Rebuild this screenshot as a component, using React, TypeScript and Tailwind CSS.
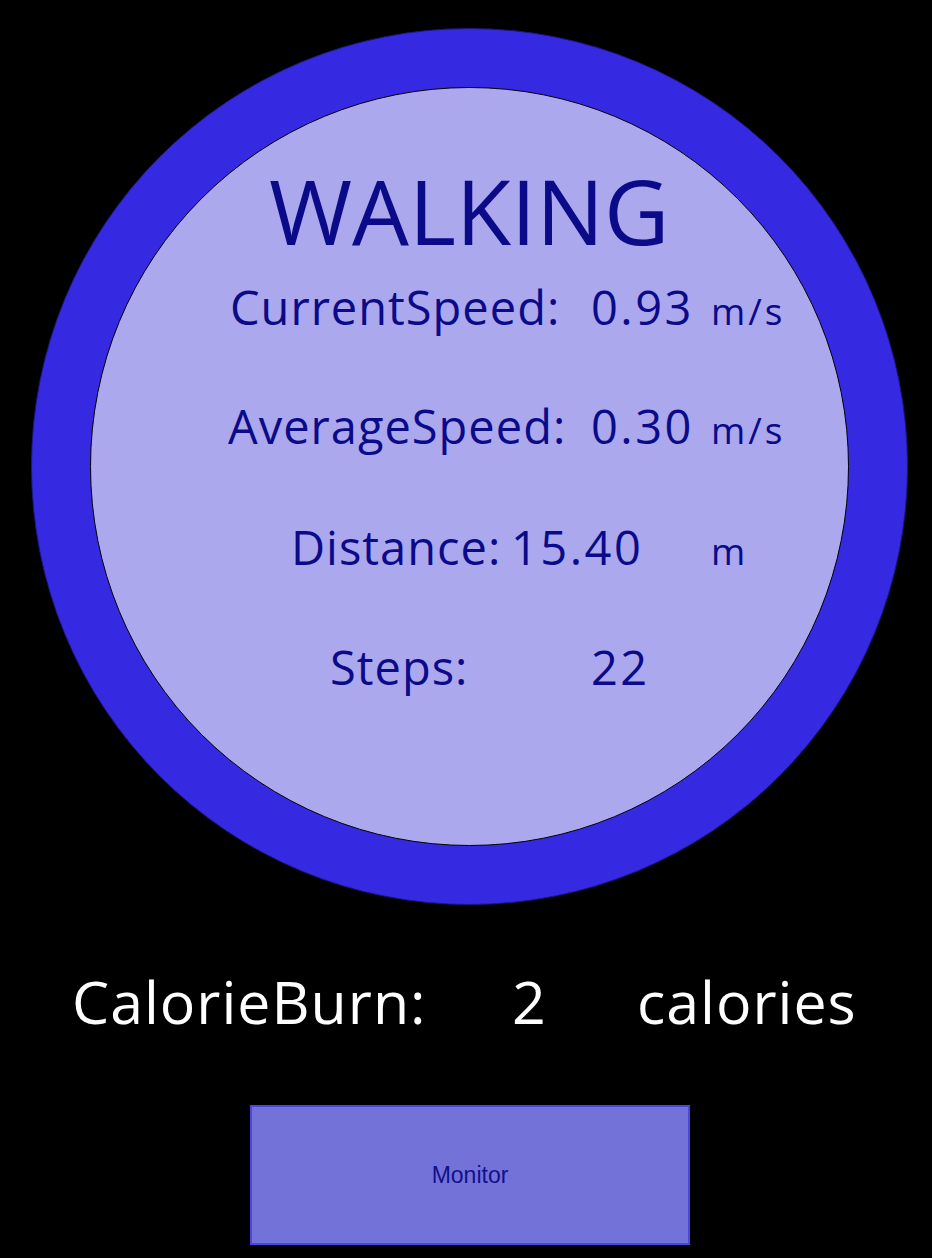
import React from 'react';

const font = { fontFamily: '"Open Sans", "DejaVu Sans", sans-serif' };

type RowProps = {
  label: string;
  value: string;
  unit?: string;
  labelBox: string;
  valueBox: string;
};

// one line of the walking stats, label and value sit at fixed columns
const StatRow: React.FC<RowProps & { className?: string }> = ({ label, value, unit, labelBox, valueBox, className }) => (
  <div className={`flex items-baseline leading-none ${className ?? ''}`}>
    <span className={`shrink-0 whitespace-nowrap text-[47px] tracking-[1px] ${labelBox}`}>{label}</span>
    <span className={`shrink-0 whitespace-nowrap text-[47px] tracking-[2.5px] ${valueBox}`}>{value}</span>
    {unit && <span className="whitespace-nowrap text-[37px] tracking-[3px]">{unit}</span>}
  </div>
);

export default function App() {
  return (
    <div className="min-h-screen w-[932px] bg-black" style={font}>
      <div className="pt-[28px] pl-[31px]">
        {/* outer ring */}
        <div className="flex h-[877px] w-[877px] items-center justify-center rounded-full border border-[#1c1680] bg-[#3629e2]">
          {/* inner face */}
          <div className="flex h-[759px] w-[759px] flex-col rounded-full border border-black bg-[#aba8ee] pt-[77px] text-[#0b0a88]">
            <div className="pl-[178px] text-[90px] leading-none">WALKING</div>
            <StatRow className="mt-[29px]" label="CurrentSpeed:" value="0.93" unit="m/s" labelBox="w-[500px] pl-[139px]" valueBox="w-[120px]" />
            <StatRow className="mt-[72px]" label="AverageSpeed:" value="0.30" unit="m/s" labelBox="w-[500px] pl-[137px]" valueBox="w-[120px]" />
            <StatRow className="mt-[74px]" label="Distance:" value="15.40" unit="m" labelBox="w-[420px] pl-[200px]" valueBox="w-[200px]" />
            <StatRow className="mt-[73px]" label="Steps:" value="22" labelBox="w-[500px] pl-[239px]" valueBox="w-[120px]" />
          </div>
        </div>
      </div>

      {/* calorie line */}
      <div className="mt-[67px] flex items-baseline pl-[72px] text-[59px] leading-none tracking-[1px] text-white">
        <span className="w-[440px] shrink-0">CalorieBurn:</span>
        <span className="w-[125px] shrink-0">2</span>
        <span>calories</span>
      </div>

      <div className="mt-[74px] pl-[250px] pb-[13px]">
        <button
          className="flex h-[140px] w-[440px] items-center justify-center border-2 border-[#4d45e0] bg-[#7272d9] text-[23px] text-[#12108a]"
          style={{ fontFamily: '"Liberation Sans", Arial, sans-serif' }}
        >
          Monitor
        </button>
      </div>
    </div>
  );
}
